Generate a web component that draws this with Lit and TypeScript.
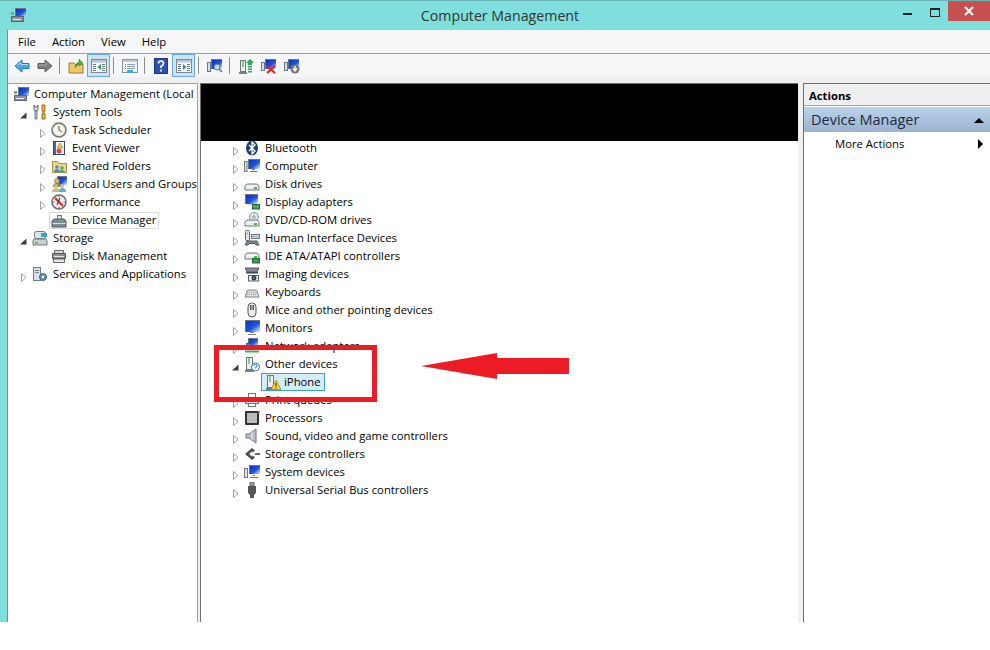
import { LitElement, html, css, svg } from "lit";
import { customElement } from "lit/decorators.js";

const screen = (x: number, y: number, w: number, h: number) => svg`
  <rect x=${x + 0.5} y=${y + 0.5} width=${w} height=${h} fill="#d5dde6" stroke="#6d7680"/>
  <rect x=${x + 1} y=${y + 1} width=${w} height=${h} fill="url(#gs)"/>`;
const win = (arrowLeft: boolean, c: string) => svg`
  <rect x=".5" y="1.5" width="15" height="13" fill="#f4f7fa" stroke="#7c8896"/>
  <rect x="1" y="2" width="14" height="2.5" fill="#b9c6d4"/>
  <path d="M2 6.500h3M2 8.500h3M2 10.500h3M2 12.500h3" stroke="#6d7a88"/>
  <path d="M11 6.500h3M11 8.500h3M11 10.500h3M11 12.500h3" stroke="#6d7a88"/>
  <path d=${arrowLeft ? "M10 6v6L6.500 9z" : "M7 6v6l3.500-3z"} fill=${c}/>`;
const drive = (y = 8) => svg`
  <path d=${`M1 ${y + 6}V${y + 2}l2-2h10l2 2v4z`} fill="#e8ecef" stroke="#6f767c"/>
  <path d=${`M1.500 ${y + 2.500}h13`} stroke="#fff"/>
  <rect x="10" y=${y + 3} width="3" height="2" fill="#4fb548"/>`;

const icons: Record<string, unknown> = {
  app: svg`${screen(5, 1, 10, 8)}<rect x="1.500" y="9.500" width="12" height="5" fill="#8b949c" stroke="#5c6369"/><path d="M3 12.500h8" stroke="#e4e8ea"/><path d="M1 5h3v3H1z" fill="#67b96a"/>`,
  tools: svg`<path d="M2 1v4q0 2 2 2t2-2V1L5 3H3z" fill="#d8dde2" stroke="#6b7278"/><path d="M3 7h2v8H3z" fill="#d8dde2" stroke="#6b7278"/><path d="M10 1h3v6h-1v3h1v5h-3v-5h1V7h-1z" fill="#f2c230" stroke="#8a6b12"/>`,
  clock: svg`<circle cx="8" cy="8" r="7" fill="#e9e6d7" stroke="#6d7680" stroke-width="1.500"/><circle cx="8" cy="8" r="5" fill="#f8f6ea"/><path d="M8 4v4l3 2" fill="none" stroke="#6b5a2a"/>`,
  log: svg`<rect x="2.500" y="1.500" width="11" height="13" fill="#4a6597" stroke="#33476f"/><rect x="5" y="2" width="8" height="12" fill="#eef1f6"/><path d="M9 3l3 5H6z" fill="#f3ca35" stroke="#8a6b12" stroke-width=".5"/><circle cx="8" cy="11" r="2.500" fill="#d6454c"/>`,
  share: svg`<path d="M1.500 3.500h5l1 2h8v9h-14z" fill="#edd48a" stroke="#a68c45"/><circle cx="6" cy="9" r="1.800" fill="#4f8fc7"/><path d="M3 14q0-3 3-3t3 3z" fill="#4f8fc7"/><circle cx="11" cy="10" r="1.800" fill="#58a65c"/><path d="M8 15q0-3 3-3t3 3z" fill="#58a65c"/>`,
  users: svg`${screen(6, 0, 9, 8)}<circle cx="6" cy="5" r="2.500" fill="#e0b47f" stroke="#7a5a30" stroke-width=".6"/><path d="M2 11q0-4 4-4t4 4z" fill="#5b9a4a"/><circle cx="5" cy="10" r="2" fill="#e0b47f"/><path d="M1 16q0-4 4-4t4 4z" fill="#c9bf7d"/><circle cx="11" cy="10" r="2" fill="#e0b47f"/><path d="M8 16q0-4 3.500-4t3.500 4z" fill="#6aa7d8"/>`,
  perf: svg`<circle cx="8" cy="8" r="7" fill="#f4efe2" stroke="#656c73" stroke-width="1.500"/><path d="M8 1.500v2M8 12.500v2M1.500 8h2M12.500 8h2" stroke="#777"/><path d="M4 4l8 8" stroke="#d5252d" stroke-width="2"/><path d="M6 11l3-7" stroke="#222"/>`,
  devmgr: svg`<path d="M1 9l2-2h10l2 2v6H1z" fill="#7e8a94" stroke="#4e565c"/><path d="M1.500 11.500h13" stroke="#d5dadd"/><rect x="6.500" y="3.500" width="4" height="3.500" fill="#dbe2e6" stroke="#6d7680"/><rect x="9" y="8" width="3" height="1.500" fill="#62c06a"/>`,
  storage: svg`<rect x="2.500" y="1.500" width="11" height="7" rx="2" fill="#dfe5e8" stroke="#6d7680"/><rect x="9" y="3" width="6" height="4" fill="#36a3d8"/><path d="M1 11l1-2h12l1 2v4H1z" fill="#c9d0d5" stroke="#6d7680"/><rect x="3" y="12" width="3" height="1.500" fill="#58b35a"/>`,
  disk: svg`<path d="M3.500 2.500h9v3h-9z" fill="#d9d9d9" stroke="#666"/><path d="M1.500 5.500h13v5h-13z" fill="#8b9096" stroke="#555"/><path d="M3 8.500h10" stroke="#e8e8e8"/><path d="M2.500 11h11v3.500h-11z" fill="#e7e7e7" stroke="#666"/>`,
  services: svg`<rect x="1.500" y="1.500" width="7" height="13" fill="#d9dfe5" stroke="#727a82"/><path d="M3 4.500h4M3 6.500h4" stroke="#78828c"/><circle cx="11" cy="11" r="3.500" fill="#6e93bd" stroke="#3f5f86"/><circle cx="11" cy="11" r="1.200" fill="#fff"/>`,
  bluetooth: svg`<ellipse cx="8" cy="8" rx="6" ry="7.500" fill="#163f73"/><path d="M5 5l6 6-3 3V2l3 3-6 6" fill="none" stroke="#fff" stroke-width="1.300"/>`,
  computer: svg`${screen(4, 1, 11, 9)}<path d="M8 11.500h3M6 13.500h7" stroke="#6d7680" fill="none"/><rect x="0.500" y="3.500" width="2.500" height="10" fill="#dfe5e8" stroke="#6d7680"/>`,
  drive: svg`${drive()}`,
  display: svg`${screen(1, 0, 12, 9)}<path d="M5 10h4v1H5z" fill="#c2cad2"/><rect x="8.500" y="10.500" width="7" height="4.500" fill="#3d9a52" stroke="#256b36"/><path d="M10 12.500h1M13 12.500h1" stroke="#d5f0d5"/>`,
  dvd: svg`<circle cx="10" cy="5" r="4.500" fill="#dfe4ea" stroke="#8a929a"/><circle cx="10" cy="5" r="1.200" fill="#fff" stroke="#8a929a"/>${drive()}`,
  hid: svg`<rect x="1.500" y=".5" width="4" height="10" rx="1" fill="#dfe5e8" stroke="#5e666d"/><path d="M3 3.500h1" stroke="#5e666d"/><rect x="7.500" y="4.500" width="8" height="4" fill="#cfd6dc" stroke="#6d7680"/><path d="M8.500 6.500h6" stroke="#6d7680" stroke-dasharray="1 1"/><path d="M3 11h10l2 4h-3l-1-1.500H5L4 15H1z" fill="#7f8a94" stroke="#4f575e"/>`,
  ide: svg`${drive(5)}<rect x="8.500" y="10.500" width="7" height="4.500" fill="#3d9a52" stroke="#256b36"/>`,
  imaging: svg`<path d="M1 2h14l-2 4H3z" fill="#7f8a94" stroke="#555d64"/><rect x="2" y="6" width="12" height="1.500" fill="#3e4850"/><rect x="4.500" y="9.500" width="10" height="5.500" fill="#e6ebef" stroke="#59616a"/><circle cx="10" cy="12" r="2" fill="#5a6a7a" stroke="#222"/>`,
  keyboard: svg`<path d="M1 13l2-6q1-1 2-1h6q1 0 2 1l2 6z" fill="#dfe3e6" stroke="#7a8288"/><path d="M3.500 8.500h9M3 10.500h10" stroke="#8a9298" stroke-dasharray="1 1"/>`,
  mouse: svg`<path d="M4 5q0-4 4-4t4 4v6q0 4-4 4t-4-4z" fill="#e9edf0" stroke="#4f565c"/><path d="M6 3h4v5H6z" fill="#555"/><path d="M8 1v7" stroke="#e9edf0"/>`,
  monitor: svg`${screen(1, 0, 14, 11)}<path d="M6 12.500h4M4 14.500h8" stroke="#7a828a" fill="none"/>`,
  network: svg`${screen(4, 0, 9, 7)}<rect x="2.500" y="5.500" width="5" height="4.500" fill="#3f7fc0" stroke="#2b5a8e"/><path d="M8 9v3M1 13.500h14" stroke="#3dab5c" stroke-width="2"/>`,
  other: svg`<rect x="2.500" y="1.500" width="6" height="12" fill="#eef1f3" stroke="#6f767c"/><rect x="4" y="2" width="2" height="6" fill="#7fcf86"/><path d="M1 15h9" stroke="#555" stroke-width="1.500"/><circle cx="11.500" cy="11" r="4" fill="#fff" stroke="#2e6ebc"/><path d="M10 10q0-1.500 1.500-1.500t1.500 1.500-1.500 1.500v1" fill="none" stroke="#2e6ebc"/>`,
  warn: svg`<rect x="2.500" y="1.500" width="6" height="12" fill="#eef1f3" stroke="#6f767c"/><rect x="4" y="2" width="2" height="6" fill="#7fcf86"/><path d="M1 15h9" stroke="#555" stroke-width="1.500"/><path d="M11 6l5 9.500H6z" fill="#f7d33d" stroke="#9a7a10" stroke-width=".7"/><path d="M11 9v3.500M11 13.500v1" stroke="#222"/>`,
  print: svg`<rect x="4.500" y="1.500" width="7" height="4.500" fill="#fff" stroke="#6d7680"/><rect x="1.500" y="6.500" width="13" height="5" fill="#d3d9de" stroke="#6d7680"/><rect x="4.500" y="11.500" width="7" height="3" fill="#fff" stroke="#6d7680"/>`,
  cpu: svg`<rect x="1" y="1" width="14" height="14" rx="1" fill="#333"/><rect x="3" y="3" width="10" height="10" fill="#bcbcbc"/><path d="M14 1h2v2h-2z" fill="#b58a2a"/>`,
  sound: svg`<path d="M2 6h3l7-5v14l-7-5H2z" fill="#b9bfc4" stroke="#70777d"/><path d="M8 4v8" stroke="#e6eaec"/>`,
  ctrl: svg`<path d="M8 2L1 8l7 6 3-2.500-4-3.500 4-3.500z" fill="#4a4f54"/><path d="M11 7h5v2h-5z" fill="#666"/><path d="M5 8l3-2.500L11 8 8 10.500z" fill="#eee"/>`,
  system: svg`${screen(5, 1, 10, 8)}<path d="M9 11.500h2M6 13.500h8" stroke="#6d7680" fill="none"/><rect x="0.500" y="4.500" width="3" height="9" fill="#dfe5e8" stroke="#6d7680"/>`,
  usb: svg`<rect x="6" y="0" width="4" height="4" fill="#9aa0a6" stroke="#5c6167"/><path d="M4 4h8v7l-2 2v3H6v-3l-2-2z" fill="#54585c"/>`,
  back: svg`<path d="M1 8l7-6v3.500h7v5H8V14z" fill="#4da6ec" stroke="#1e73c4"/><path d="M3 7.500l4-3v2h7" fill="none" stroke="#b5dcf8"/>`,
  fwd: svg`<path d="M15 8L8 2v3.500H1v5h7V14z" fill="#7f7f7f" stroke="#5c5c5c"/><path d="M2 7h7V4.500" fill="none" stroke="#a9a9a9"/>`,
  up: svg`<path d="M1 5h5l1 1.500h8V15H1z" fill="#ecc867" stroke="#9b7f38"/><path d="M7 10q0-5 4-6V1l4 4-4 3V6q-2 1-4 4z" fill="#57ad3e" stroke="#2f7d22" stroke-width=".5"/>`,
  toggleL: win(true, "#2f9c55"),
  toggleR: win(false, "#2f9c55"),
  list: svg`<rect x=".5" y="1.500" width="15" height="13" fill="#f3f5f7" stroke="#8a949e"/><rect x="1" y="2" width="14" height="2" fill="#c3ccd5"/><path d="M5 6.500h8M5 8.500h8M5 10.500h8" stroke="#8a9fb5"/><path d="M3 6.500h1M3 8.500h1M3 10.500h1" stroke="#2f78c4"/><rect x="5" y="12" width="6" height="3" fill="#41a7e0"/>`,
  help: svg`<rect x="1.500" y=".5" width="13" height="15" fill="#2f50b0" stroke="#1f3680"/><path d="M5.500 5.500Q5.500 3 8 3t2.500 2.500Q10.500 7 8 8.500V10M8 11.500v2" fill="none" stroke="#fff" stroke-width="1.700"/>`,
  scan: svg`<rect x="0.500" y="4.500" width="3" height="9" fill="#d5dde6" stroke="#6d7680"/>${screen(4, 1, 10, 9)}<circle cx="10" cy="9" r="3" fill="#dce9f6" fill-opacity=".8" stroke="#60738a"/><path d="M12 11l3 3" stroke="#60738a" stroke-width="1.500"/>`,
  update: svg`<rect x="2.500" y="2.500" width="5" height="11" fill="#eef1f3" stroke="#6f767c"/><rect x="4" y="3" width="2" height="6" fill="#7fcf86"/><path d="M1 15h8" stroke="#555" stroke-width="1.500"/><path d="M12 1l4 4h-2v2h-4V5H8z" fill="#2ea85c"/><path d="M10 8h4v1.500h-4zM10 10.500h4V12h-4zM10 13h4v1.500h-4z" fill="#2ea85c"/>`,
  del: svg`<rect x="0.500" y="4.500" width="3" height="8" fill="#d5dde6" stroke="#6d7680"/>${screen(4, 1, 10, 9)}<path d="M6 8l8 7M14 8l-8 7" stroke="#e2231a" stroke-width="2.200"/>`,
  down: svg`<rect x="0.500" y="4.500" width="3" height="8" fill="#d5dde6" stroke="#6d7680"/>${screen(4, 1, 10, 9)}<circle cx="11" cy="11" r="4.500" fill="#777"/><path d="M11 8v4M9 10.500l2 2.500 2-2.500" fill="none" stroke="#fff" stroke-width="1.300"/>`,
};

const icon = (n: string) => html`<svg class="ic" viewBox="0 0 16 16">${icons[n]}</svg>`;

const twist = (k: string) =>
  html`<span class="tw">${k === "o"
    ? html`<svg width="10" height="10" viewBox="0 0 10 10"><path d="M2.500 1.500l4.500 4-4.500 4z" fill="#fff" stroke="#a0a0a0"/></svg>`
    : k === "e"
    ? html`<svg width="10" height="10" viewBox="0 0 10 10"><path d="M7.500 2.500v6h-6.500z" fill="#3c3c3c"/></svg>`
    : ""}</span>`;

const leftRows = [
  { c: "lv0", ic: "app", t: "Computer Management (Local" },
  { c: "lv1", k: "e", ic: "tools", t: "System Tools" },
  { c: "lv2", k: "o", ic: "clock", t: "Task Scheduler" },
  { c: "lv2", k: "o", ic: "log", t: "Event Viewer" },
  { c: "lv2", k: "o", ic: "share", t: "Shared Folders" },
  { c: "lv2", k: "o", ic: "users", t: "Local Users and Groups" },
  { c: "lv2", k: "o", ic: "perf", t: "Performance" },
  { c: "lv2", k: "n", ic: "devmgr", t: "Device Manager", sel: true },
  { c: "lv1", k: "e", ic: "storage", t: "Storage" },
  { c: "lv2", k: "n", ic: "disk", t: "Disk Management" },
  { c: "lv1", k: "o", ic: "services", t: "Services and Applications" },
];

const devices: [string, string, string?][] = [
  ["bluetooth", "Bluetooth"], ["computer", "Computer"], ["drive", "Disk drives"],
  ["display", "Display adapters"], ["dvd", "DVD/CD-ROM drives"], ["hid", "Human Interface Devices"],
  ["ide", "IDE ATA/ATAPI controllers"], ["imaging", "Imaging devices"], ["keyboard", "Keyboards"],
  ["mouse", "Mice and other pointing devices"], ["monitor", "Monitors"], ["network", "Network adapters"],
  ["other", "Other devices", "e"], ["warn", "iPhone", "c"], ["print", "Print queues"], ["cpu", "Processors"],
  ["sound", "Sound, video and game controllers"], ["ctrl", "Storage controllers"],
  ["system", "System devices"], ["usb", "Universal Serial Bus controllers"],
];

const tools = ["back", "fwd", "|", "up", "*toggleL", "|", "list", "|", "help", "*toggleR", "|", "scan", "|", "update", "del", "down"];

@customElement("app-root")
export class AppRoot extends LitElement {
  static styles = css`
    :host { display: block; position: relative; height: 650px; width: 990px; overflow: hidden; background: #fff;
      font: 11.3px/18px "Open Sans", sans-serif; color: #000; }
    .defs { position: absolute; width: 0; height: 0; }
    .window { height: 622px; display: flex; flex-direction: column; background: #7fdfdc; }
    .title { height: 30px; flex: none; box-sizing: border-box; border-top: 1px solid #68b4b2; display: grid;
      grid-template-columns: 1fr auto 1fr; }
    .title .appic { padding: 6px 0 0 10px; }
    .title h1 { margin: 0 0 0 10px; font: 400 14.2px/29px "Open Sans", sans-serif; color: #333; }
    .ctl { display: flex; justify-content: flex-end; align-items: flex-start; }
    .min { width: 9px; height: 2px; background: #222; margin: 12px 18px 0 0; }
    .max { width: 8px; height: 6px; border: 1px solid #222; border-top-width: 2px; margin: 7px 8px 0 0; }
    .close { width: 42px; height: 20px; background: #c75050; color: #fff; display: flex; align-items: center; justify-content: center; }
    .client { flex: 1; min-height: 0; margin-left: 7px; border-left: 1px solid #7b8f90; display: flex; flex-direction: column; background: #f0f0f0; }
    .menu { height: 23px; flex: none; background: #f5f6f7; border-bottom: 1px solid #a0a0a0; display: flex; align-items: center; padding-left: 10px; gap: 16px; }
    .tb { height: 23px; flex: none; background: #f5f6f7; display: flex; padding-left: 2px; }
    .btn { width: 23px; height: 23px; box-sizing: border-box; display: flex; align-items: center; justify-content: center; }
    .btn.on { background: #cce4f7; border: 1px solid #6aa8e0; }
    .sep { width: 8px; display: flex; padding-left: 3px; box-sizing: border-box; }
    .sep i { width: 1px; height: 17px; margin-top: 3px; background: #8c8c8c; }
    .ic { width: 16px; height: 16px; flex: none; display: block; }
    .main { flex: 1; min-height: 0; display: flex; margin-top: 6px; }
    .left { width: 189px; background: #fff; border-top: 1px solid #a0a0a0; border-right: 1px solid #a0a0a0; overflow: hidden; padding-top: 1px; flex: none; }
    .center { flex: 1; min-width: 0; margin-left: 2px; background: #fff; border-left: 1px solid #6e6e6e; overflow: hidden; border-top: 1px solid #6e6e6e; }
    .right { width: 186px; flex: none; margin-left: 5px; background: #fff; border-left: 1px solid #6e6e6e; border-top: 1px solid #6e6e6e; }
    .row { display: flex; align-items: center; height: 18px; white-space: nowrap; }
    .row .ic { margin-right: 5px; }
    .tw { width: 10px; height: 10px; flex: none; margin-right: 3px; }
    .lv0 { padding-left: 5px; }
    .lv1 { padding-left: 11px; }
    .lv2 { padding-left: 30px; }
    .cur { margin-left: 13px; }
    .cursel { display: flex; align-items: center; height: 17px; padding: 0 2px 0 1px; margin-left: -2px; border: 1px solid #d9d9d9; box-sizing: border-box; }
    .black { height: 57px; background: #000; position: relative; }
    .list { margin-top: -2px; padding-left: 30px; }
    .child { margin-left: 30px; }
    .pick { display: flex; align-items: center; height: 16px; border: 1px solid #3aa0dc; background: #d3ecfb; padding: 0 3px; }
    .pick .ic { margin-right: 3px; }
    .ah { height: 21px; line-height: 23px; background: #efefef; border-bottom: 1px solid #a0a0a0; padding-left: 5px; font-weight: 700; margin-bottom: 1px; }
    .band { height: 25px; box-sizing: border-box; padding: 1px 6px 0 7px; display: flex; align-items: center; justify-content: space-between;
      background: linear-gradient(#bcd3eb, #9ab2d1); font-size: 14.5px; color: #1c2a3a; }
    .up { width: 0; height: 0; border: 5px solid transparent; border-top: 0; border-bottom: 5px solid #000; }
    .more { display: flex; justify-content: space-between; align-items: center; height: 18px; padding: 0 7px 0 31px; margin-top: 3px; }
    .rt { width: 0; height: 0; border: 5px solid transparent; border-right: 0; border-left: 5px solid #000; }
    .frame { position: absolute; left: 214px; top: 345px; width: 153px; height: 47px; border: 5px solid #ed1c24; }
    .arrow { position: absolute; left: 421px; top: 353px; }
  `;

  render() {
    return html`
      <svg class="defs"><defs><linearGradient id="gs" x1="0" y1="0" x2="1" y2="1">
        <stop offset="0" stop-color="#0d2fc4"/><stop offset=".55" stop-color="#1f55da"/><stop offset="1" stop-color="#e8f1fb"/>
      </linearGradient></defs></svg>
      <div class="window">
        <div class="title">
          <div class="appic">${icon("app")}</div>
          <h1>Computer Management</h1>
          <div class="ctl">
            <div class="min"></div><div class="max"></div>
            <div class="close"><svg width="10" height="10" viewBox="0 0 10 10"><path d="M1 1l8 8M9 1l-8 8" stroke="#fff" stroke-width="2"/></svg></div>
          </div>
        </div>
        <div class="client">
          <div class="menu"><span>File</span><span>Action</span><span>View</span><span>Help</span></div>
          <div class="tb">
            ${tools.map((t) =>
              t === "|"
                ? html`<div class="sep"><i></i></div>`
                : t[0] === "*"
                ? html`<div class="btn on">${icon(t.slice(1))}</div>`
                : html`<div class="btn">${icon(t)}</div>`
            )}
          </div>
          <div class="main">
            <div class="left">
              ${leftRows.map((r) =>
                r.sel
                  ? html`<div class="row lv2 cur"><span class="cursel">${icon(r.ic)}${r.t}</span></div>`
                  : html`<div class="row ${r.c} ${r.k === "n" ? "cur" : ""}">
                      ${r.k && r.k !== "n" ? twist(r.k) : ""}${icon(r.ic)}<span>${r.t}</span>
                    </div>`
              )}
            </div>
            <div class="center">
              <div class="black"></div>
              <div class="list">
                ${devices.map(([ic, t, k]) =>
                  k === "c"
                    ? html`<div class="row child"><span class="pick">${icon(ic)}${t}</span></div>`
                    : html`<div class="row">${twist(k ?? "o")}${icon(ic)}<span>${t}</span></div>`
                )}
              </div>
            </div>
            <div class="right">
              <div class="ah">Actions</div>
              <div class="band"><span>Device Manager</span><i class="up"></i></div>
              <div class="more"><span>More Actions</span><i class="rt"></i></div>
            </div>
          </div>
        </div>
      </div>
      <div class="frame"></div>
      <svg class="arrow" width="148" height="26" viewBox="0 0 148 26"><path d="M0 13L76 0v5h72v16H76v5z" fill="#ed1c24"/></svg>
    `;
  }
}
